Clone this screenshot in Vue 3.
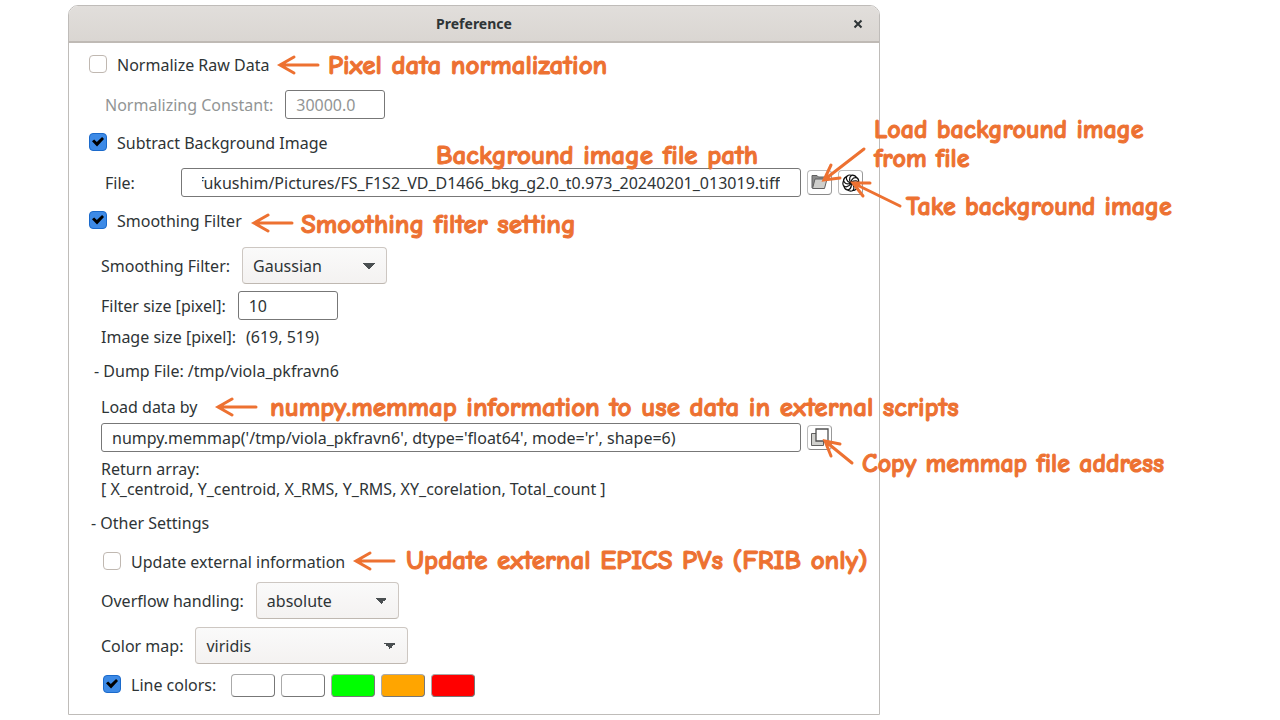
<script setup>
import { ref, onMounted } from 'vue'

const normalize = ref(false)
const subtract = ref(true)
const smoothing = ref(true)
const updateExternal = ref(false)
const lineColorsOn = ref(true)

const constant = ref('30000.0')
const path = ref('/fukushim/Pictures/FS_F1S2_VD_D1466_bkg_g2.0_t0.973_20240201_013019.tiff')
const filter = ref('Gaussian')
const filterSize = ref('10')
const memmap = ref("numpy.memmap('/tmp/viola_pkfravn6', dtype='float64', mode='r', shape=6)")
const overflow = ref('absolute')
const colormap = ref('viridis')
const lineColors = ref(['#ffffff', '#ffffff', '#00ff00', '#ffa500', '#ff0000'])

const pathInput = ref(null)
// Keep the file name at the end of the path in view.
onMounted(() => {
  pathInput.value.scrollLeft = pathInput.value.scrollWidth
})

const blades = Array.from({ length: 9 }, (_, i) => i * 40)
</script>

<template>
  <main class="page">
    <section class="window" aria-labelledby="title">
      <header class="titlebar">
        <h1 id="title">Preference</h1>
        <button class="close" type="button" aria-label="Close">
          <svg width="10" height="10" viewBox="0 0 10 10"><path d="M1.5 1.5L8.500 8.500M8.500 1.500L1.500 8.500" /></svg>
        </button>
      </header>

      <form class="body" @submit.prevent>
        <div class="row check">
          <input id="normalize" v-model="normalize" type="checkbox" />
          <label for="normalize">Normalize Raw Data</label>
        </div>
        <div class="row sub constant">
          <label for="constant">Normalizing Constant:</label>
          <input id="constant" v-model="constant" class="text short" type="text" disabled />
        </div>
        <div class="row check">
          <input id="subtract" v-model="subtract" type="checkbox" />
          <label for="subtract">Subtract Background Image</label>
        </div>
        <div class="row sub file">
          <label for="path">File:</label>
          <input id="path" ref="pathInput" v-model="path" class="text grow path" type="text" />
          <button class="tool" type="button" aria-label="Load background image from file">
            <svg width="17" height="17" viewBox="0 0 17 17">
              <path d="M1 14V1.500H6L7.500 3H14.500V6" fill="#8c8c8c" stroke="#606060" />
              <path d="M1.500 14.500L4 5H16L13.500 14.500Z" fill="#cfcfcc" stroke="#606060" />
            </svg>
          </button>
          <button class="tool" type="button" aria-label="Take background image">
            <svg width="18" height="18" viewBox="-9 -9 18 18">
              <g fill="none" stroke="#111" stroke-width="1.200">
                <path
                  v-for="a in blades"
                  :key="a"
                  :transform="`rotate(${a})`"
                  d="M0 -1C1 -5 4 -6 6 -5.200C7.600 -4 8 -2 7.600 0"
                />
              </g>
              <circle r="1.800" fill="#111" />
            </svg>
          </button>
        </div>
        <div class="row check">
          <input id="smoothing" v-model="smoothing" type="checkbox" />
          <label for="smoothing">Smoothing Filter</label>
        </div>

        <div class="row filter">
          <label for="filter">Smoothing Filter:</label>
          <select id="filter" v-model="filter" class="w-filter"><option>Gaussian</option></select>
        </div>
        <div class="row size">
          <label for="size">Filter size [pixel]:</label>
          <input id="size" v-model="filterSize" class="text short" type="text" />
        </div>
        <div class="row image-size">
          <span>Image size [pixel]:</span>
          <span>(619, 519)</span>
        </div>

        <h2 class="dump">- Dump File: /tmp/viola_pkfravn6</h2>
        <div class="row load"><label for="memmap">Load data by</label></div>
        <div class="row memmap">
          <input id="memmap" v-model="memmap" class="text grow" type="text" />
          <button class="tool" type="button" aria-label="Copy memmap file address">
            <svg width="19" height="19" viewBox="0 0 19 19">
              <path d="M1.500 5.500H13.500V17.500H1.500Z" fill="#cfcfcc" stroke="#606060" />
              <path d="M6 1H18V13H6Z" fill="#fff" stroke="#505050" stroke-width="1.300" />
            </svg>
          </button>
        </div>
        <p class="array">Return array:<br />[ X_centroid, Y_centroid, X_RMS, Y_RMS, XY_corelation, Total_count ]</p>

        <h2 class="other">- Other Settings</h2>
        <div class="row check external">
          <input id="external" v-model="updateExternal" type="checkbox" />
          <label for="external">Update external information</label>
        </div>
        <div class="row overflow">
          <label for="overflow">Overflow handling:</label>
          <select id="overflow" v-model="overflow" class="w-overflow"><option>absolute</option></select>
        </div>
        <div class="row colormap">
          <label for="colormap">Color map:</label>
          <select id="colormap" v-model="colormap" class="w-colormap"><option>viridis</option></select>
        </div>
        <div class="row check colors">
          <input id="line-colors" v-model="lineColorsOn" type="checkbox" />
          <label for="line-colors">Line colors:</label>
          <div class="swatches">
            <button
              v-for="(c, i) in lineColors"
              :key="i"
              class="swatch"
              type="button"
              :aria-label="`Line color ${i + 1}`"
              :style="{ background: c }"
            ></button>
          </div>
        </div>
      </form>

      <!-- Callouts lie over the window and its right edge. -->
      <div class="notes">
        <svg class="arrows" width="840" height="600" viewBox="0 0 840 600">
          <path d="M250 60H212M226 52L212 60L226 68" />
          <path d="M224 218H186M200 210L186 218L200 226" />
          <path d="M188 402H150M164 394L150 402L164 410" />
          <path d="M326 556H288M302 548L288 556L302 564" />
          <path d="M796 144L756 175M763 160L756 175L772 173" />
          <path d="M832 201L785 178M802 178L785 178L795 191" />
          <path d="M784 458L757 436M772 439L757 436L763 451" />
        </svg>
        <p class="note n-normalize">Pixel data normalization</p>
        <p class="note n-path">Background image file path</p>
        <p class="note side n-load">Load background image<br />from file</p>
        <p class="note side n-take">Take background image</p>
        <p class="note n-smooth">Smoothing filter setting</p>
        <p class="note n-memmap">numpy.memmap information to use data in external scripts</p>
        <p class="note side n-copy">Copy memmap file address</p>
        <p class="note n-epics">Update external EPICS PVs (FRIB only)</p>
      </div>
    </section>
  </main>
</template>

<style>
body {
  background: #fff;
}
</style>

<style scoped>
.page {
  padding: 5px 400px 5px 68px;
  font: 16px/26px "Noto Sans", "Open Sans", sans-serif;
  color: #2e3436;
}
.window {
  position: relative;
  border: 1px solid #bfbcb9;
  border-radius: 10px 10px 0 0;
}
.titlebar {
  display: grid;
  grid-template-columns: 32px 1fr 32px;
  align-items: center;
  height: 35px;
  border-bottom: 2px solid #bfbab5;
  border-radius: 9px 9px 0 0;
  background: linear-gradient(#e1dedb, #dad6d2);
}
h1 {
  grid-column: 2;
  margin: 0;
  font-size: 14px;
  font-weight: 700;
  text-align: center;
}
.close {
  display: flex;
  width: 22px;
  height: 22px;
  padding: 0;
  border: 0;
  background: none;
  align-items: center;
  justify-content: center;
}
.close path {
  stroke: #2e3436;
  stroke-width: 2;
}
.body {
  padding: 9px 16px 16px 20px;
}
.row {
  display: flex;
  align-items: center;
  min-height: 26px;
  gap: 12px;
  white-space: nowrap;
}
.check,
.image-size {
  gap: 10px;
}
.sub {
  margin: 12px 0 11px;
  padding-left: 16px;
}
.constant {
  color: #929595;
}
.row.file,
.memmap {
  gap: 6px;
}
.file label {
  width: 70px;
}
input,
select {
  font: inherit;
  color: inherit;
}
input[type="checkbox"] {
  appearance: none;
  display: grid;
  place-items: center;
  flex: none;
  width: 18px;
  height: 18px;
  margin: 0 0 2px;
  border: 1px solid #c0b8b1;
  border-radius: 4px;
  background: #fff;
}
input[type="checkbox"]:checked {
  border-color: #1b6acb;
  background: #3d8ae6;
}
input[type="checkbox"]:checked::after {
  content: "";
  width: 12px;
  height: 10px;
  background: #000;
  clip-path: polygon(0 42%, 18% 26%, 40% 50%, 84% 0, 100% 20%, 42% 96%);
}
.text {
  box-sizing: border-box;
  height: 29px;
  min-width: 0;
  padding: 0 10px;
  border: 1px solid #777;
  border-radius: 3px;
  background: #fff;
}
.path {
  padding: 0 20px;
}
.short {
  width: 100px;
}
.grow {
  flex: 1;
}
.tool {
  display: flex;
  flex: none;
  align-items: center;
  justify-content: center;
  width: 25px;
  height: 25px;
  padding: 0;
  border: 1px solid;
  border-color: #bbb #999 #888 #bbb;
  border-radius: 4px;
  background: #fff;
}
.tool svg {
  flex: none;
}
select {
  box-sizing: border-box;
  appearance: none;
  height: 37px;
  padding: 0 10px;
  border: 1px solid #cdc7c2;
  border-bottom-color: #bfb8b1;
  border-radius: 4px;
  background:
    linear-gradient(to bottom left, #4a4f51 50%, transparent 50%) right 17px top 15px / 6px 6px no-repeat,
    linear-gradient(to bottom right, #4a4f51 50%, transparent 50%) right 11px top 15px / 6px 6px no-repeat,
    linear-gradient(#fafafa, #f4f2f1);
}
.w-filter {
  width: 145px;
}
.w-overflow {
  width: 143px;
}
.w-colormap {
  width: 213px;
}
.filter {
  margin-top: 13px;
  padding-left: 12px;
}
.size {
  margin-top: 7px;
  padding-left: 12px;
}
.image-size {
  margin-top: 4px;
  padding-left: 12px;
}
h2 {
  margin: 0;
  font-size: 16px;
  font-weight: 400;
}
.dump {
  margin-top: 8px;
  padding-left: 5px;
}
.load {
  margin-top: 10px;
  padding-left: 12px;
}
.memmap {
  margin-top: 3px;
  margin-right: 31px;
  padding-left: 12px;
}
.array {
  margin: 7px 0 0;
  padding-left: 12px;
  line-height: 20px;
}
.other {
  margin-top: 11px;
  padding-left: 2px;
}
.external {
  margin-top: 13px;
  padding-left: 14px;
}
.overflow {
  margin-top: 7px;
  padding-left: 12px;
}
.colormap {
  margin-top: 8px;
  padding-left: 12px;
}
.colors {
  margin-top: 8px;
  padding-left: 14px;
}
.swatches {
  display: flex;
  gap: 6px;
  margin-left: 5px;
}
.swatch {
  width: 44px;
  height: 23px;
  padding: 0;
  border: 1px solid;
  border-color: #aaa #777 #777 #aaa;
  border-radius: 4px;
}
.notes {
  position: absolute;
  top: -1px;
  left: -1px;
  pointer-events: none;
}
.arrows {
  display: block;
  overflow: visible;
  fill: none;
  stroke: #ed7131;
  stroke-width: 3;
  stroke-linecap: round;
}
.note {
  position: absolute;
  margin: 0;
  color: #ed7131;
  font: 700 27px/29px "Comic Sans MS", "Comic Neue", "Noto Sans", sans-serif;
  -webkit-text-stroke: 1px #ed7131;
  white-space: nowrap;
}
.side {
  font-size: 26px;
}
.n-normalize { left: 260px; top: 46px; }
.n-path { left: 368px; top: 136px; }
.n-load { left: 806px; top: 111px; }
.n-take { left: 838px; top: 188px; }
.n-smooth { left: 233px; top: 205px; }
.n-memmap { left: 202px; top: 388px; }
.n-copy { left: 794px; top: 445px; }
.n-epics { left: 338px; top: 541px; }
</style>
